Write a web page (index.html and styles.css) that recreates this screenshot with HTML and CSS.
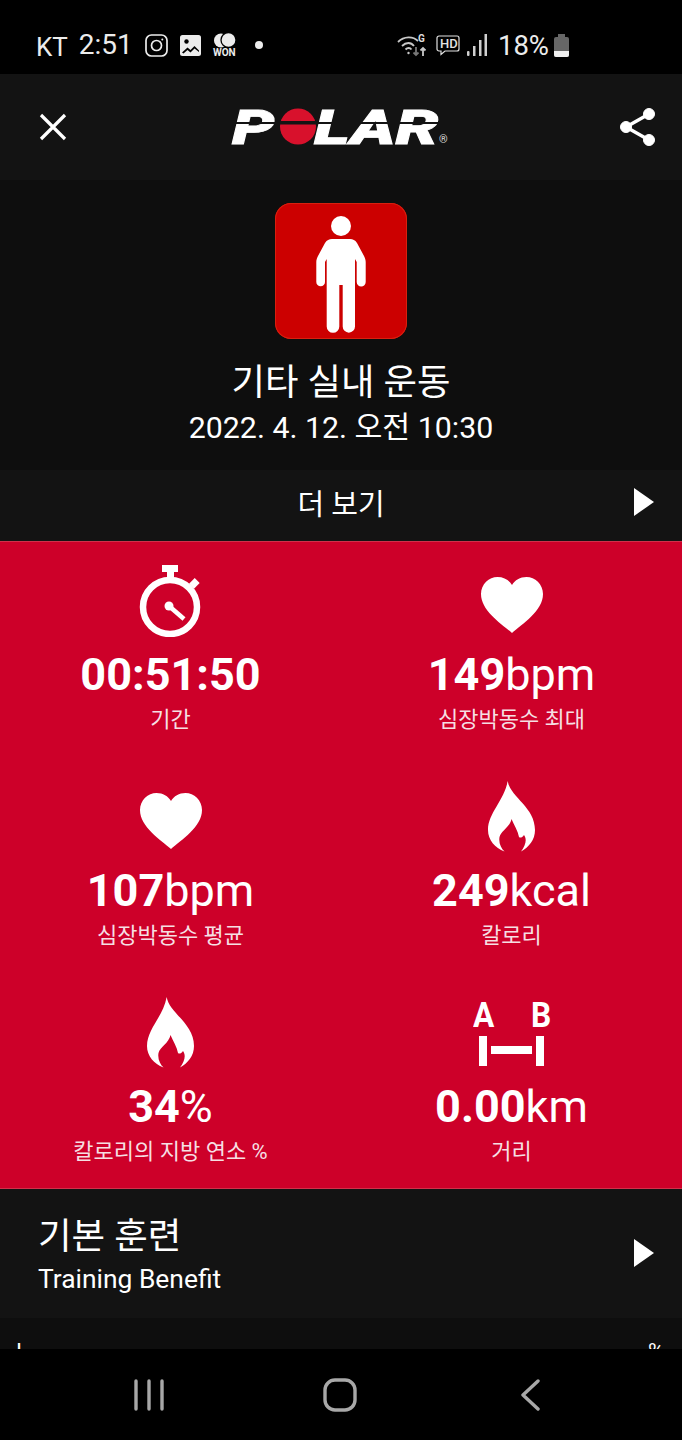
FILE: index.html
```html
<!DOCTYPE html>
<html lang="ko">
<head>
    <meta charset="UTF-8">
    <meta name="viewport" content="width=device-width, initial-scale=1.0">
    <title>Polar</title>
    <link rel="stylesheet" href="styles.css">
</head>
<body>
    <div class="status-bar">
        <div class="status-left">
            <span class="carrier">KT</span>
            <span class="clock">2:51</span>
            <svg class="ic-insta" width="23" height="23" viewBox="0 0 23 23" fill="none" stroke="#ececec" stroke-width="1.7"><rect x="1" y="1" width="21" height="21" rx="5.5"/><circle cx="11.5" cy="11.5" r="5"/><circle cx="17.3" cy="5.5" r="1" fill="#ececec" stroke="none"/></svg>
            <svg class="ic-gallery" width="21" height="21" viewBox="0 0 21 21"><rect width="21" height="21" rx="2.5" fill="#ececec"/><circle cx="6.5" cy="6.5" r="2.2" fill="#000"/><path d="M2 17.5l5.5-5 3 2.5 4-4 4.5 4.5v1.5l-4.5-3.500-4 4-3-2.500-4 3.500z" fill="#000"/></svg>
            <span class="won">
                <svg width="23" height="15" viewBox="0 0 23 15"><circle cx="8" cy="7.500" r="7" fill="#ececec"/><circle cx="15.500" cy="7" r="7.500" fill="#ececec" stroke="#000" stroke-width="1.300"/></svg>
                <span class="won-label">WON</span>
            </span>
            <span class="dot"></span>
        </div>
        <div class="status-right">
            <svg width="30" height="24" viewBox="0 0 30 24" fill="none" stroke="#c8c8c8" stroke-width="1.800"><path d="M1 9c6-6 15-6 20-1"/><path d="M5 13c4-4 9-4 12 0"/><path d="M8.500 16.500c2-2 4.500-2 6 0"/><circle cx="11.500" cy="20" r="1.200" fill="#c8c8c8" stroke="none"/><path d="M19 14v8m-2.500-2.500l2.500 2.500 2.500-2.500" stroke="#777"/><path d="M26 23v-8m-2.500 2.500l2.500-2.500 2.500 2.500"/><text class="wifi-g" x="21" y="9">G</text></svg>
            <svg class="ic-hd" width="24" height="21" viewBox="0 0 24 21" fill="none" stroke="#e2e2e2" stroke-width="1.200"><path d="M3 1h18a2 2 0 0 1 2 2v11a2 2 0 0 1-2 2H9l-4 3.500V16H3a2 2 0 0 1-2-2V3a2 2 0 0 1 2-2z"/><text class="hd-text" x="4" y="13">HD</text></svg>
            <svg class="ic-signal" width="20" height="22" viewBox="0 0 20 22" fill="#cfcfcf"><rect x="0" y="17" width="2.500" height="5" rx="1"/><rect x="6" y="12" width="2.500" height="10"/><rect x="12" y="6" width="2.500" height="16"/><rect x="17.500" y="0" width="2.500" height="22"/></svg>
            <span class="battery-pct">18%</span>
            <span class="battery"><span class="battery-fill"></span></span>
        </div>
    </div>

    <header class="top-bar">
        <svg width="28" height="28" viewBox="0 0 28 28" stroke="#fff" stroke-width="3.200"><path d="M2 2l24 24M26 2L2 26"/></svg>
        <svg class="logo" width="220" height="72" viewBox="-4 -16 220 72" role="img" aria-label="Polar">
            <text class="logo-text" transform="translate(-2 37) scale(1.4 1)">P</text>
            <text class="logo-text" transform="translate(80 37) scale(1.42 1)">LAR</text>
            <rect x="0" y="15" width="204" height="2" fill="#131313"/>
            <circle cx="64" cy="19.500" r="18" fill="#d8112c"/>
            <rect x="46" y="14" width="36" height="3.500" fill="#141414"/>
            <text class="logo-reg" x="205" y="36">®</text>
        </svg>
        <svg width="36" height="40" viewBox="0 0 36 40" fill="#fff" stroke="#fff"><path d="M6 20L29 7M6 20l23 13" stroke-width="3.400" fill="none"/><circle cx="6" cy="20" r="5.500"/><circle cx="29" cy="7" r="5.500"/><circle cx="29" cy="33" r="5.500"/></svg>
    </header>

    <section class="summary">
        <div class="sport-tile">
            <svg width="132" height="136" viewBox="0 0 132 136" fill="#fff"><circle cx="66" cy="23" r="10"/><path d="M57 36H75C78 36 80 37 82 40L89 53C90 55 90.700 57 90.700 59V79A4.500 4.500 0 0 1 81.700 79V59L80 56V123.500A6.150 6.150 0 0 1 67.700 123.500V82H64.300V123.500A6.300 6.300 0 0 1 51.700 123.500V56L50 59V79A4.350 4.350 0 0 1 41.300 79V59C41.300 57 42 55 43 53L50 40C52 37 54 36 57 36Z"/></svg>
        </div>
        <h1 class="sport-name">기타 실내 운동</h1>
        <p class="sport-date">2022. 4. 12. 오전 10:30</p>
    </section>

    <div class="more-row">
        <span class="more-label">더 보기</span>
        <span class="arrow"></span>
    </div>

    <section class="stats">
        <div class="stat">
            <div class="stat-icon">
                <svg width="64" height="72" viewBox="0 0 64 72"><path d="M23 0H39V7H35V14H28V7H23Z" fill="#fff"/><rect x="52" y="14" width="7" height="8" transform="rotate(45 55 18)" fill="#fff"/><circle cx="31" cy="42" r="27" fill="none" stroke="#fff" stroke-width="6.500"/><circle cx="30" cy="41" r="4.500" fill="#fff"/><path d="M30 41L45 54" stroke="#fff" stroke-width="4.500"/></svg>
            </div>
            <div class="stat-value">00:51:50</div>
            <div class="stat-label">기간</div>
        </div>
        <div class="stat">
            <div class="stat-icon">
                <svg width="64" height="72" viewBox="0 -4 64 72"><path d="M32 64C22 55 1 42 1 25C1 15 9 8 17.500 8C24 8 29 11 32 16C35 11 40 8 46.500 8C55 8 63 15 63 25C63 42 42 55 32 64Z" fill="#fff"/></svg>
            </div>
            <div class="stat-value">149<span class="unit">bpm</span></div>
            <div class="stat-label">심장박동수 최대</div>
        </div>
        <div class="stat">
            <div class="stat-icon">
                <svg width="64" height="72" viewBox="0 -4 64 72"><path d="M32 64C22 55 1 42 1 25C1 15 9 8 17.500 8C24 8 29 11 32 16C35 11 40 8 46.500 8C55 8 63 15 63 25C63 42 42 55 32 64Z" fill="#fff"/></svg>
            </div>
            <div class="stat-value">107<span class="unit">bpm</span></div>
            <div class="stat-label">심장박동수 평균</div>
        </div>
        <div class="stat">
            <div class="stat-icon">
                <svg width="48" height="72" viewBox="0 0 48 72"><path d="M19.700 0C22 16 47 26 47 49C47 59 41 66 33 70.500C38 64 39 58 36 54C34 57 32 57 31 56C30 50 26 44 23.500 38C22 46 13 50 11.500 56C10.500 62 13 67 16.500 70.500C7 67 0 59 0 49C0 32 16 20 19.700 0Z" fill="#fff"/></svg>
            </div>
            <div class="stat-value">249<span class="unit">kcal</span></div>
            <div class="stat-label">칼로리</div>
        </div>
        <div class="stat">
            <div class="stat-icon">
                <svg width="48" height="72" viewBox="0 0 48 72"><path d="M19.700 0C22 16 47 26 47 49C47 59 41 66 33 70.500C38 64 39 58 36 54C34 57 32 57 31 56C30 50 26 44 23.500 38C22 46 13 50 11.500 56C10.500 62 13 67 16.500 70.500C7 67 0 59 0 49C0 32 16 20 19.700 0Z" fill="#fff"/></svg>
            </div>
            <div class="stat-value">34<span class="unit">%</span></div>
            <div class="stat-label">칼로리의 지방 연소 %</div>
        </div>
        <div class="stat">
            <div class="stat-icon">
                <svg width="78" height="90" viewBox="0 -12 78 90" fill="#fff"><text class="ab-text" transform="translate(0 27) scale(.88 1)">A</text><text class="ab-text" transform="translate(58 27) scale(.88 1)">B</text><rect x="6" y="36" width="8" height="30"/><rect x="63" y="36" width="8" height="30"/><rect x="18" y="46" width="41" height="8"/></svg>
            </div>
            <div class="stat-value">0.00<span class="unit">km</span></div>
            <div class="stat-label">거리</div>
        </div>
    </section>

    <div class="benefit-row">
        <div>
            <h2 class="benefit-title">기본 훈련</h2>
            <p class="benefit-sub">Training Benefit</p>
        </div>
        <span class="arrow"></span>
    </div>

    <div class="peek-row">
        <span>I</span>
        <span>%</span>
    </div>

    <nav class="nav-bar">
        <svg width="30" height="32" viewBox="0 0 30 32" stroke="#a8a8a8" stroke-width="3.400" stroke-linecap="round"><path d="M2 2v28M15 2v28M28 2v28"/></svg>
        <svg class="nav-home" width="34" height="34" viewBox="0 0 34 34" fill="none" stroke="#a8a8a8" stroke-width="3.400"><rect x="2" y="2" width="30" height="30" rx="10"/></svg>
        <svg width="20" height="32" viewBox="0 0 20 32" fill="none" stroke="#a8a8a8" stroke-width="3.400" stroke-linecap="round" stroke-linejoin="round"><path d="M18 2L3 16l15 14"/></svg>
    </nav>
</body>
</html>
```

FILE: styles.css
```css
* {
    box-sizing: border-box;
}
body {
    margin: 0;
    width: 682px;
    height: 1440px;
    overflow: hidden;
    background-color: #000;
    color: #fff;
    font-family: Roboto, "Noto Sans CJK KR", sans-serif;
}
h1, h2, p {
    margin: 0;
    font-weight: 400;
}
svg {
    display: block;
}

/* status bar */
.status-bar {
    height: 74px;
    padding: 32px 113px 16px 36px;
    display: flex;
    justify-content: space-between;
    align-items: center;
    color: #ececec;
}
.status-left, .status-right {
    display: flex;
    align-items: center;
}
.carrier {
    font-size: 26px;
    margin-top: 3px;
}
.clock {
    font-size: 28px;
    margin-left: 11px;
    margin-top: -2px;
}
.ic-insta {
    margin-left: 12px;
}
.ic-gallery {
    margin-left: 12px;
}
.won {
    margin-left: 12px;
    display: flex;
    flex-direction: column;
    align-items: center;
}
.won-label {
    font-size: 10px;
    font-weight: 700;
    line-height: 10px;
}
.dot {
    width: 8px;
    height: 8px;
    margin-left: 19px;
    border-radius: 50%;
    background-color: #ececec;
}
.status-right svg {
    flex: none;
}
.wifi-g {
    font-size: 10px;
    font-weight: 700;
    fill: #ddd;
    stroke: none;
}
.hd-text {
    font-size: 13px;
    font-weight: 500;
    fill: #e2e2e2;
    stroke: none;
}
.ic-hd {
    margin-left: 9px;
}
.ic-signal {
    margin-left: 7px;
}
.battery-pct {
    font-size: 27.500px;
    margin-left: 11px;
}
.battery {
    position: relative;
    width: 15px;
    height: 20px;
    margin-left: 5px;
    margin-top: 3px;
    border-radius: 2px;
    background-color: #666;
}
.battery::before {
    content: "";
    position: absolute;
    top: -3px;
    left: 4px;
    width: 7px;
    height: 3px;
    background-color: #666;
}
.battery-fill {
    display: block;
    height: 6px;
    margin-top: 14px;
    border-radius: 0 0 2px 2px;
    background-color: #efefef;
}

/* top bar */
.top-bar {
    height: 106px;
    padding: 0 26px 0 39px;
    display: flex;
    justify-content: space-between;
    align-items: center;
    background-color: #131313;
}
.logo {
    margin-left: -8px;
}
.logo-text {
    font-size: 48px;
    font-weight: 900;
    font-style: italic;
    fill: #fff;
    stroke: #fff;
    stroke-width: 0.800px;
}
.logo-reg {
    font-size: 11px;
    fill: #ddd;
}

/* workout summary */
.summary {
    height: 290px;
    padding-top: 23px;
    display: flex;
    flex-direction: column;
    align-items: center;
    background-color: #0e0e0e;
}
.sport-tile {
    width: 132px;
    height: 136px;
    border-radius: 16px;
    background-color: #cc0000;
    box-shadow: inset 0 0 0 1px #d8200f;
}
.sport-name {
    margin-top: 20px;
    font-size: 36.400px;
    line-height: 48px;
}
.sport-date {
    margin-top: 1px;
    font-size: 30.300px;
    line-height: 40px;
}

.more-row {
    position: relative;
    height: 71px;
    padding: 0 28px 7px 0;
    display: flex;
    justify-content: flex-end;
    align-items: center;
    background-color: #131313;
}
.more-label {
    position: absolute;
    left: 0;
    right: 0;
    text-align: center;
    font-size: 29px;
}
.arrow {
    width: 0;
    height: 0;
    border-left: 20px solid #fff;
    border-top: 14px solid transparent;
    border-bottom: 14px solid transparent;
}

/* red stats grid */
.stats {
    display: grid;
    grid-template-columns: 1fr 1fr;
    grid-auto-rows: 216px;
    background-color: #cd0029;
    box-shadow: inset 0 1px 0 #d0304a, inset 0 -1px 0 #d0304a;
}
.stat {
    padding-top: 24px;
    display: flex;
    flex-direction: column;
    align-items: center;
}
.stat-icon {
    height: 72px;
    display: flex;
    align-items: center;
    justify-content: center;
}
.stat-value {
    margin-top: 13px;
    font-size: 45px;
    line-height: 50px;
    font-weight: 700;
}
.unit {
    font-weight: 400;
}
.stat-label {
    margin-top: 6px;
    font-size: 22px;
    line-height: 28px;
    color: #f6dfe3;
}
.ab-text {
    font-size: 36px;
    font-weight: 700;
}

.benefit-row {
    height: 129px;
    padding: 24px 28px 0 38px;
    display: flex;
    justify-content: space-between;
    align-items: flex-start;
    background-color: #131313;
}
.benefit-row .arrow {
    margin-top: 26px;
}
.benefit-title {
    font-size: 36.500px;
    line-height: 48px;
}
.benefit-sub {
    margin-top: 1px;
    font-size: 26.400px;
    line-height: 34px;
}

.peek-row {
    height: 31px;
    padding: 20px 18px 0 16px;
    display: flex;
    justify-content: space-between;
    overflow: hidden;
    background-color: #0e0e0e;
    font-size: 22px;
    line-height: 28px;
}

.nav-bar {
    height: 91px;
    padding: 0 142px 0 134px;
    display: flex;
    justify-content: space-between;
    align-items: center;
    background-color: #000;
}
.nav-home {
    margin-right: 4px;
}
```
